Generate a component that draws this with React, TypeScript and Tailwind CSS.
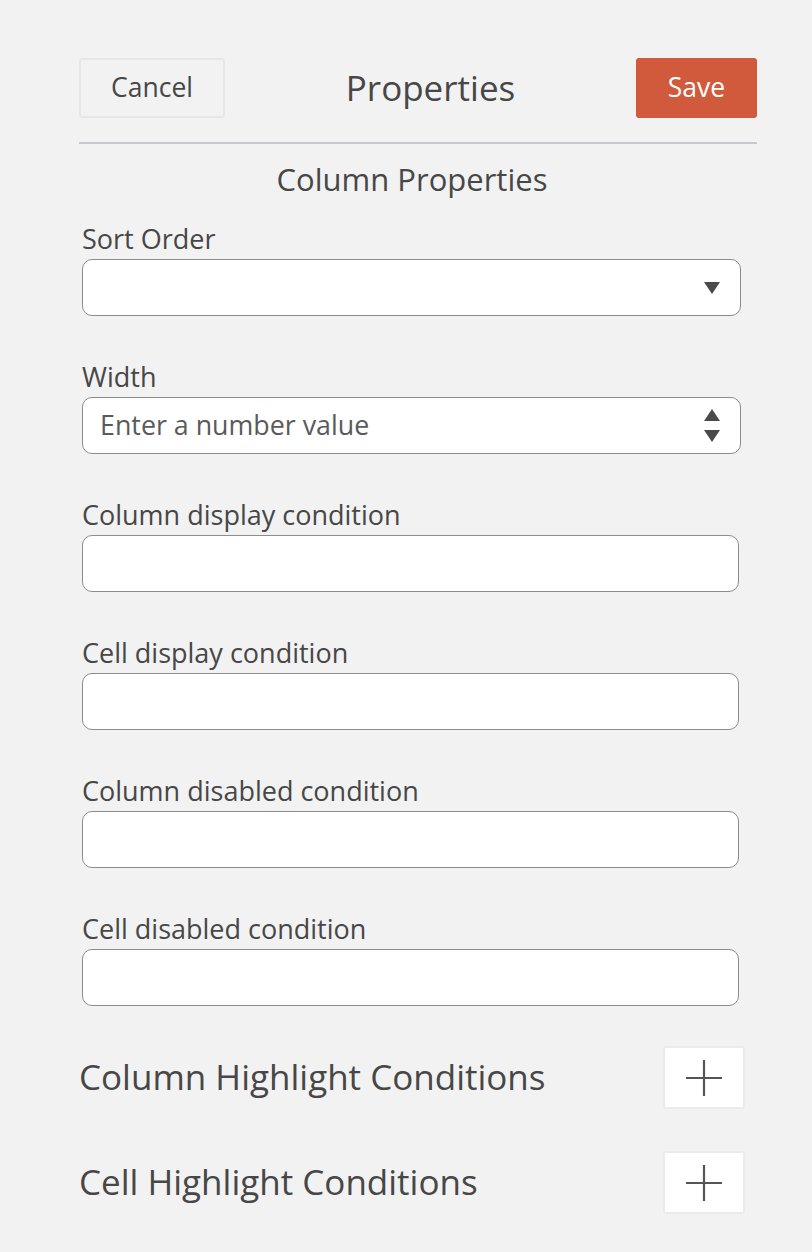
import React from "react";

const font = { fontFamily: '"Open Sans", "Noto Sans", sans-serif' };

function Field({ label, children }: { label: string; children: React.ReactNode }) {
  return (
    <div className="flex flex-col">
      <div className="h-[30px] leading-[30px] text-[27px] text-[#474747] pl-[3px] mb-[5px] whitespace-nowrap">{label}</div>
      {children}
    </div>
  );
}

function TextBox() {
  return <div className="h-[57px] bg-white border border-[#8c8c8c] rounded-[10px] ml-[3px] mr-[6px]" />;
}

function PlusButton() {
  return (
    <div className="w-[82px] h-[63px] bg-white border-2 border-[#ebebeb] rounded-[3px] flex items-center justify-center">
      <svg width="36" height="36" viewBox="0 0 36 36">
        <line x1="0" y1="18" x2="36" y2="18" stroke="#555" strokeWidth="2.2" />
        <line x1="18" y1="0" x2="18" y2="36" stroke="#555" strokeWidth="2.2" />
      </svg>
    </div>
  );
}

export default function App() {
  return (
    <div className="min-h-[1252px] w-full bg-[#f2f2f2] pl-[79px] pr-[55px] pt-[58px]" style={font}>
      <div className="flex items-center h-[60px]">
        <div className="w-[146px] h-[60px] border-2 border-[#e6e6e6] rounded-[3px] flex items-center justify-center text-[26.5px] text-[#474747]">
          Cancel
        </div>
        <div className="flex-1 text-center text-[35px] text-[#474747]">Properties</div>
        <div className="w-[121px] h-[60px] bg-[#d05a3b] rounded-[3px] flex items-center justify-center text-[26.5px] text-white">
          Save
        </div>
      </div>
      <div className="mt-[24px] h-[2px] bg-[#c8c8cc]" />
      <div className="pr-[12px]">
        <div className="mt-[15px] h-[40px] leading-[40px] text-center text-[31px] text-[#474747]">
          Column Properties
        </div>
        <div className="mt-[25px] flex flex-col gap-[46px]">
          <Field label="Sort Order">
            <div className="h-[57px] bg-white border border-[#8c8c8c] rounded-[10px] ml-[3px] mr-[4px] flex items-center justify-end pr-[20px]">
              <svg width="16" height="12" viewBox="0 0 16 12">
                <polygon points="0,0 16,0 8,12" fill="#4a4a4a" />
              </svg>
            </div>
          </Field>
          <Field label="Width">
            <div className="h-[57px] bg-white border border-[#8c8c8c] rounded-[10px] ml-[3px] mr-[4px] flex items-center pl-[17px] pr-[20px]">
              <span className="flex-1 text-[26.8px] text-[#5a5a5a]">Enter a number value</span>
              <div className="flex flex-col gap-[9px]">
                <svg width="16" height="12" viewBox="0 0 16 12">
                  <polygon points="8,0 16,12 0,12" fill="#4a4a4a" />
                </svg>
                <svg width="16" height="12" viewBox="0 0 16 12">
                  <polygon points="0,0 16,0 8,12" fill="#4a4a4a" />
                </svg>
              </div>
            </div>
          </Field>
          <Field label="Column display condition">
            <TextBox />
          </Field>
          <Field label="Cell display condition">
            <TextBox />
          </Field>
          <Field label="Column disabled condition">
            <TextBox />
          </Field>
          <Field label="Cell disabled condition">
            <TextBox />
          </Field>
        </div>
        <div className="mt-[40px] flex flex-col gap-[42px]">
          <div className="flex items-center justify-between">
            <span className="text-[35px] text-[#474747]">Column Highlight Conditions</span>
            <PlusButton />
          </div>
          <div className="flex items-center justify-between">
            <span className="text-[35px] text-[#474747]">Cell Highlight Conditions</span>
            <PlusButton />
          </div>
        </div>
      </div>
    </div>
  );
}
